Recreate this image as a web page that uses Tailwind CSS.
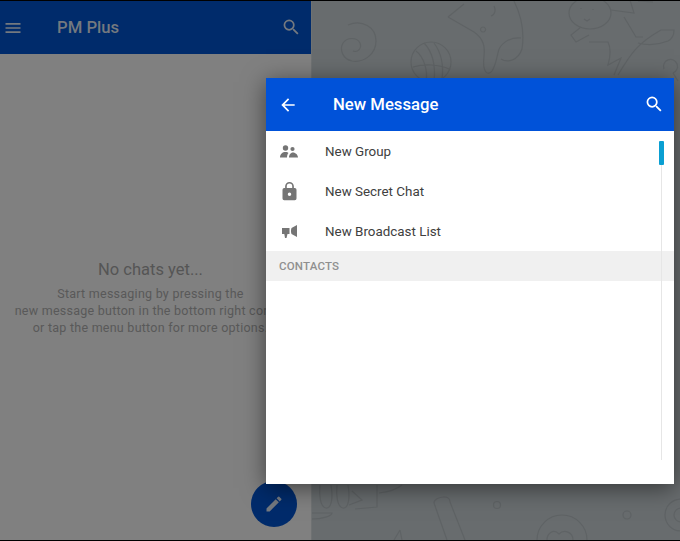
<!DOCTYPE html>
<html lang="en">
<head>
    <meta charset="UTF-8">
    <title>PM Plus</title>
    <script src="https://cdn.jsdelivr.net/npm/@tailwindcss/browser@4"></script>
</head>
<body class="relative h-[541px] w-[680px] overflow-hidden bg-black font-['Roboto',sans-serif]">

<div class="flex h-full flex-col py-px">
    <div class="flex min-h-0 flex-1">
        <!-- Chat list (dimmed) -->
        <div class="relative flex w-[312px] flex-col border-r border-[#6f7273] bg-[#808080]">
            <div class="flex h-[53px] shrink-0 items-center bg-[#002b6b]">
                <svg class="ml-[3px] h-5 w-5" viewBox="0 0 24 24" fill="#74797f"><path d="M3 18h18v-2H3v2zm0-5h18v-2H3v2zm0-7v2h18V6H3z"/></svg>
                <span class="ml-[34px] text-[16.7px] font-medium text-[#74797f]">PM Plus</span>
                <svg class="mr-[10px] ml-auto h-[20.5px] w-[20.5px]" viewBox="0 0 24 24" fill="#74797f"><path d="M15.5 14h-.79l-.28-.27A6.47 6.47 0 0 0 16 9.5 6.5 6.5 0 1 0 9.5 16c1.61 0 3.09-.59 4.23-1.57l.27.28v.79l5 4.99L20.49 19l-4.99-5zm-6 0C7.01 14 5 11.99 5 9.5S7.01 5 9.5 5 14 7.01 14 9.5 11.99 14 9.5 14z"/></svg>
            </div>
            <div class="flex flex-1 flex-col items-center overflow-hidden pt-[204px] pr-[10px] text-[#555555]">
                <p class="text-[16.5px] leading-6 whitespace-nowrap">No chats yet...</p>
                <p class="mt-[3px] whitespace-nowrap text-center text-[12.5px] leading-[17px] tracking-[0.25px] text-[#595959]">Start messaging by pressing the<br>new message button in the bottom right corner<br>or tap the menu button for more options.</p>
            </div>
            <button class="absolute top-[480px] left-[251px] flex h-[46px] w-[46px] items-center justify-center rounded-full bg-[#002b6b]">
                <svg class="h-5 w-5" viewBox="0 0 24 24" fill="#74797f"><path d="M3 17.25V21h3.75L17.81 9.94l-3.75-3.75L3 17.25zM20.71 7.04a1 1 0 0 0 0-1.41l-2.34-2.34a1 1 0 0 0-1.41 0l-1.83 1.83 3.75 3.75 1.83-1.83z"/></svg>
            </button>
        </div>

        <!-- Wallpaper with doodles -->
        <div class="relative flex-1 overflow-hidden bg-[#686c6e]">
            <svg class="absolute inset-0 h-full w-full" viewBox="0 0 368 539" fill="none" stroke="#5f6365" stroke-width="1.2">
                <!-- swirl -->
                <path d="M36 24c14-6 28 2 28 16 0 13-12 22-24 20-9-2-13-11-9-18 4-6 14-6 17 0 2 5-2 10-7 8"/>
                <!-- top cat -->
                <path d="M136 16l16-13M202 0c10 20 10 35 8 48-4 12-15 14-21 10"/>
                <path d="M136 16l26 15c10 7 11 15 10 24-2 17 4 20 8 15 4-6 5-15 6-18"/>
                <path d="M186 52c1-8 10-16 23-15M171 26a2.5 2.5 0 1 0 .1 0M182 5c2 4 1 9-3 10"/>
                <!-- wool ball -->
                <circle cx="119" cy="61" r="20"/>
                <path d="M104 50c8 6 12 20 10 30M112 42c8 8 12 22 10 38M122 42c6 8 10 20 8 36M101 66c10-3 26-3 36 2"/>
                <!-- rabbit -->
                <ellipse cx="278" cy="12" rx="21" ry="16"/>
                <path d="M269 7v1M281 8v1M272 18l3 2 3-2"/>
                <path d="M269 26l-10 8 5 7 13-7M277 41h19c3 6 2 16 0 23l13-7-7 17"/>
                <path d="M306 74c13-22 20-32 43-45h13c0 5-2 9-6 11-10 4-22 4-30 2M312 16l12 20h7M299 9l23 3-4-13M326 0l15 1"/>
                <path d="M352 68a7 7 0 1 1 9 4M361 72l5 8"/>
                <!-- bottom left doodles -->
                <path d="M8 484c-1 10 0 22 6 23s7-12 5-23M25 484c-1 10 0 22 6 23s7-12 5-23"/>
                <path d="M37 504l13-5-10-9M65 484v22l-22 2M67 492c10-1 18-4 23-8"/>
                <path d="M0 512h20c0 3-10 6-20 6M88 529l-6 10M88 529l2 10"/>
                <!-- bar -->
                <path d="M122 502c0-4 6-6 10-6s6 2 6 5l15 38M122 502l13 37"/>
                <circle cx="185" cy="504" r="3.5"/>
                <circle cx="315" cy="514" r="4"/>
                <!-- bottom right -->
                <path d="M225 539a25 25 0 0 1 50 0M235 539c0-6 6-12 12-6 5-5 14-2 14 6"/>
                <circle cx="369" cy="514" r="16"/>
                <circle cx="369" cy="514" r="7"/>
            </svg>
        </div>
    </div>
</div>

<!-- New message dialog -->
<div class="absolute top-[78px] left-[266px] flex h-[406px] w-[408px] flex-col bg-white shadow-[0_4px_22px_rgba(0,0,0,0.5)]">
    <div class="flex h-[53px] shrink-0 items-center bg-[#0052d9]">
        <svg class="ml-3 h-5 w-5" viewBox="0 0 24 24" fill="#fff"><path d="M20 11H7.83l5.59-5.59L12 4l-8 8 8 8 1.41-1.41L7.83 13H20v-2z"/></svg>
        <span class="ml-[35px] text-[16.7px] font-medium text-white">New Message</span>
        <svg class="mr-[10px] ml-auto h-[20.5px] w-[20.5px]" viewBox="0 0 24 24" fill="#fff"><path d="M15.5 14h-.79l-.28-.27A6.47 6.47 0 0 0 16 9.5 6.5 6.5 0 1 0 9.5 16c1.61 0 3.09-.59 4.23-1.57l.27.28v.79l5 4.99L20.49 19l-4.99-5zm-6 0C7.01 14 5 11.99 5 9.5S7.01 5 9.5 5 14 7.01 14 9.5 11.99 14 9.5 14z"/></svg>
    </div>
    <div class="relative flex-1">
        <div class="flex h-10 items-center text-[13.4px] text-[#404040]">
            <div class="flex w-[46px] justify-center">
                <svg class="h-[13px] w-[18px]" viewBox="0 0 18 13" fill="#757575"><circle cx="5.5" cy="3" r="2.7"/><circle cx="12.5" cy="4" r="2.1"/><path d="M0 12.5c0-3.5 2.5-5.5 5.500-5.500 1.500 0 2.700.5 3 1-1 1-1.500 2.700-1.500 4.500H0zM9 12.500c0-2.500 1.500-5 4-5s5 2.500 5 5H9z"/></svg>
            </div>
            <span class="ml-[13px] pt-[2px]">New Group</span>
        </div>
        <div class="flex h-10 items-center text-[13.4px] text-[#404040]">
            <div class="flex w-[46px] justify-center">
                <svg class="h-[21px] w-[21px]" viewBox="0 0 24 24" fill="#757575"><path d="M18 8h-1V6A5 5 0 0 0 7 6v2H6a2 2 0 0 0-2 2v10a2 2 0 0 0 2 2h12a2 2 0 0 0 2-2V10a2 2 0 0 0-2-2zm-6 9a2 2 0 1 1 0-4 2 2 0 0 1 0 4zm3.100-9H8.900V6a3.100 3.100 0 0 1 6.200 0v2z"/></svg>
            </div>
            <span class="ml-[13px] pt-[2px]">New Secret Chat</span>
        </div>
        <div class="flex h-10 items-center text-[13.4px] text-[#404040]">
            <div class="flex w-[46px] justify-center">
                <svg class="h-[13px] w-[15px]" viewBox="0 0 15 13" fill="#757575"><path d="M0 3h7.500v6H5.500l-1 4H3l-.7-4H0V3zM9.500 3L15 0v12L9.500 9c-.7-2-.7-4 0-6z"/></svg>
            </div>
            <span class="ml-[13px] pt-[2px]">New Broadcast List</span>
        </div>
        <div class="flex h-[30px] items-center bg-[#f0f0f0] pt-px pl-[13px] text-[11.5px] font-medium tracking-[0.2px] text-[#8f8f8f]">CONTACTS</div>
        <!-- Scrollbar -->
        <div class="absolute top-[34px] right-3 h-[295px] w-px bg-[#e6e6e6]"></div>
        <div class="absolute top-[10px] right-[10px] h-6 w-[5px] rounded-[1px] bg-[#0a9fd2]"></div>
    </div>
</div>

</body>
</html>
